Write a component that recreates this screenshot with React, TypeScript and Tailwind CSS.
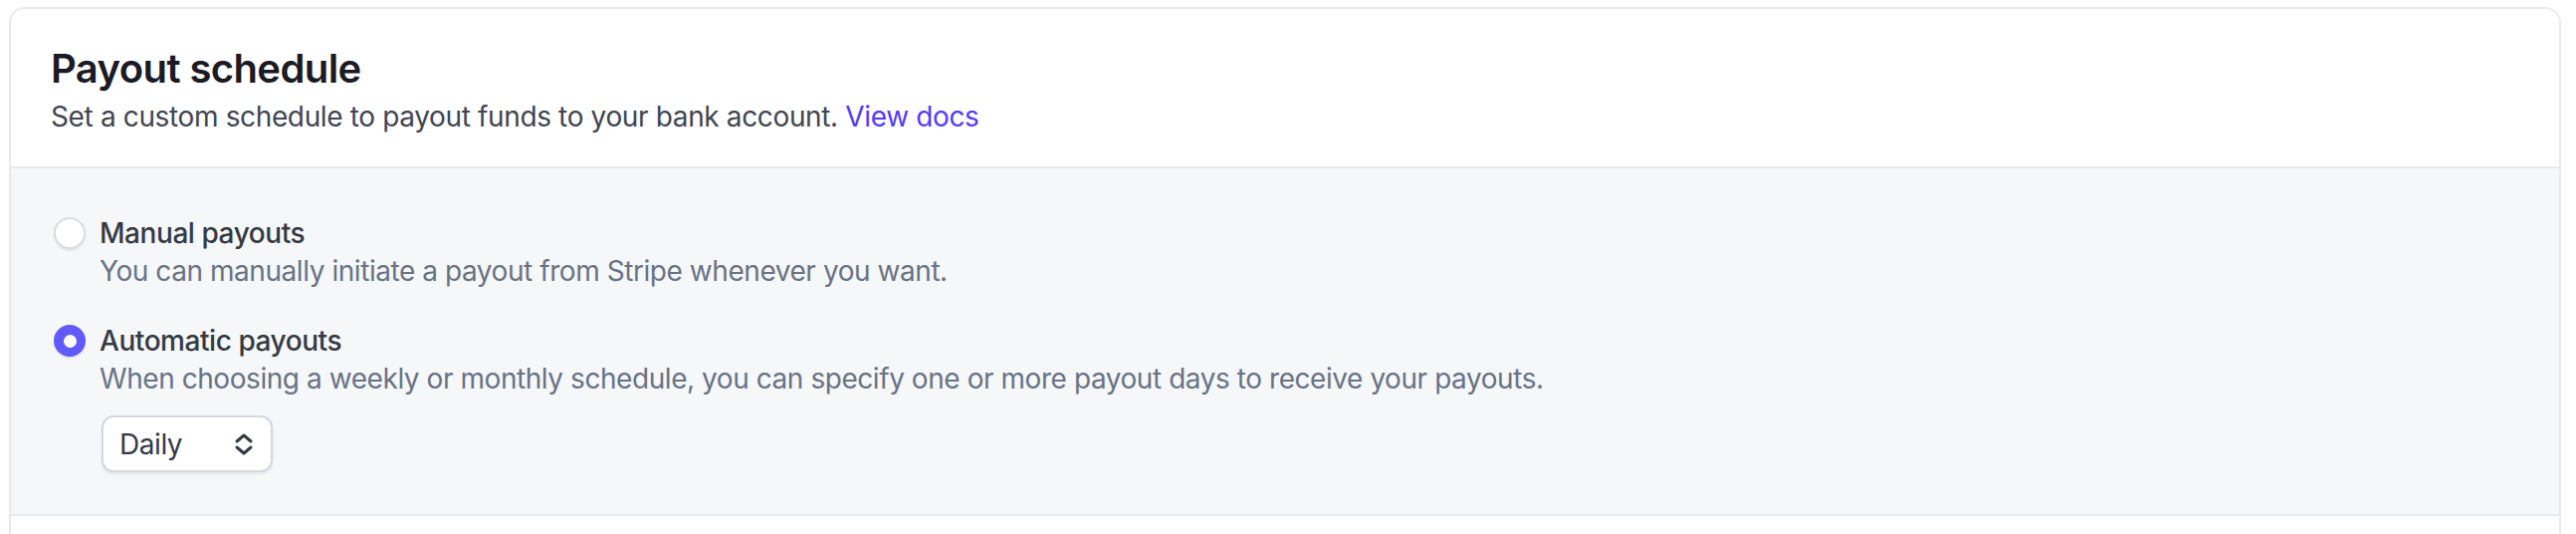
export default function App() {
  return (
    <div className="w-[2588px] h-[536px] overflow-hidden bg-white pt-[7px] pl-[9px] font-['Inter','Noto_Sans',sans-serif]">
      <div className="w-[2564px] border-2 border-[#e8e9ee] rounded-t-[16px] overflow-hidden">
        {/* Header */}
        <div className="px-[40px] pt-[32px] pb-[30px] bg-white">
          <h2 className="text-[40px] leading-[56px] font-semibold text-[#1a1b25] tracking-[-0.6px]">Payout schedule</h2>
          <p className="text-[28px] leading-[40px] text-[#414552] tracking-[-0.36px]">
            Set a custom schedule to payout funds to your bank account.{" "}
            <a className="text-[#533afd]">View docs</a>
          </p>
        </div>

        {/* Options */}
        <div className="border-t-2 border-[#e8e9ee] bg-[#f6f7f9] pl-[43px] pt-[46px] pb-[42px] tracking-[-0.44px]">
          <div className="flex flex-col gap-[32px]">
            <div className="flex items-start gap-[14px]">
              <div className="h-[38px] flex items-center shrink-0">
                <span className="w-[32px] h-[32px] rounded-full bg-white border-2 border-[#d8dbe1] shadow-[0_2px_2px_rgba(0,0,0,0.08)]" />
              </div>
              <div>
                <p className="text-[28px] leading-[38px] font-medium text-[#353a44]">Manual payouts</p>
                <p className="text-[28px] leading-[38px] text-[#687385]">
                  You can manually initiate a payout from Stripe whenever you want.
                </p>
              </div>
            </div>

            <div className="flex items-start gap-[14px]">
              <div className="h-[38px] flex items-center shrink-0">
                <span className="w-[32px] h-[32px] rounded-full bg-[#625afa] flex items-center justify-center shadow-[0_2px_2px_rgba(0,0,0,0.08)]">
                  <span className="w-[13px] h-[13px] rounded-full bg-white" />
                </span>
              </div>
              <div>
                <p className="text-[28px] leading-[38px] font-medium text-[#353a44]">Automatic payouts</p>
                <p className="text-[28px] leading-[38px] text-[#687385]">
                  When choosing a weekly or monthly schedule, you can specify one or more payout days to receive your payouts.
                </p>
                <div className="mt-[18px] ml-[2px] w-[172px] h-[57px] border-2 border-[#d5d8de] rounded-[12px] bg-white shadow-[0_2px_3px_rgba(0,0,0,0.08)] flex items-center justify-between pl-[16px] pr-[17px]">
                  <span className="text-[28px] leading-[38px] text-[#353a44]">Daily</span>
                  <svg width="20" height="24" viewBox="0 0 20 24" fill="none" stroke="#353a44" strokeWidth="3" strokeLinecap="round" strokeLinejoin="round">
                    <polyline points="3,9 10,3 17,9" />
                    <polyline points="3,15 10,21 17,15" />
                  </svg>
                </div>
              </div>
            </div>
          </div>
        </div>

        {/* Footer */}
        <div className="h-[100px] bg-white border-t-2 border-[#e8e9ee]" />
      </div>
    </div>
  );
}
